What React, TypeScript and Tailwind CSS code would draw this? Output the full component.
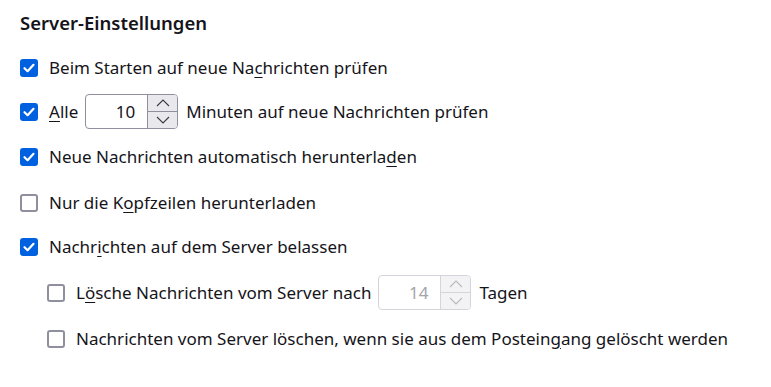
import React from "react";

const Check = ({ checked }: { checked: boolean }) =>
  checked ? (
    <span className="w-[18px] h-[18px] shrink-0 rounded-[3px] bg-[#0061e0] flex items-center justify-center">
      <svg width="14" height="14" viewBox="0 0 14 14" fill="none">
        <path d="M2.5 7.2 L5.6 10.2 L11.5 3.8" stroke="white" strokeWidth="2.2" strokeLinecap="round" strokeLinejoin="round" />
      </svg>
    </span>
  ) : (
    <span className="w-[18px] h-[18px] shrink-0 rounded-[3px] border-2 border-[#8f8f9d] bg-white" />
  );

const Spin = ({ value, disabled }: { value: string; disabled?: boolean }) => {
  const stroke = disabled ? "#b8b8c0" : "#3a3a42";
  return (
    <div
      className={
        "w-[93px] h-[35px] shrink-0 flex rounded-[4px] border overflow-hidden " +
        (disabled ? "border-[#d4d4da]" : "border-[#8f8f9d]")
      }
    >
      <div
        className={
          "flex-1 flex items-center justify-end pr-[12px] text-[17px] " +
          (disabled ? "text-[#a4a4ab]" : "text-[#15141a]")
        }
      >
        {value}
      </div>
      <div
        className={
          "w-[30px] flex flex-col border-l " +
          (disabled ? "border-[#d4d4da] bg-[#f3f3f5]" : "border-[#8f8f9d] bg-[#e9e9ed]")
        }
      >
        <div
          className={
            "flex-1 flex items-center justify-center border-b " +
            (disabled ? "border-[#d4d4da]" : "border-[#8f8f9d]")
          }
        >
          <svg width="14" height="8" viewBox="0 0 14 8" fill="none">
            <path d="M1 7 L7 1 L13 7" stroke={stroke} strokeWidth="1.1" />
          </svg>
        </div>
        <div className="flex-1 flex items-center justify-center">
          <svg width="14" height="8" viewBox="0 0 14 8" fill="none">
            <path d="M1 1 L7 7 L13 1" stroke={stroke} strokeWidth="1.1" />
          </svg>
        </div>
      </div>
    </div>
  );
};

const U = ({ children }: { children: React.ReactNode }) => (
  <span className="underline underline-offset-[3px]">{children}</span>
);

export default function App() {
  return (
    <div
      className="w-[771px] h-[387px] bg-white text-[#15141a] text-[17px] pl-[20px] flex flex-col whitespace-nowrap"
      style={{ fontFamily: '"Noto Sans", sans-serif' }}
    >
      <div className="h-[45px] flex items-center text-[18.5px] font-semibold">Server-Einstellungen</div>

      <label className="h-[45px] flex items-center gap-[11px]">
        <Check checked />
        <span>
          Beim Starten auf neue Na<U>c</U>hrichten prüfen
        </span>
      </label>

      <div className="h-[43px] flex items-center gap-[11px]">
        <Check checked />
        <div className="flex items-center gap-[7px]">
          <span>
            <U>A</U>lle
          </span>
          <Spin value="10" />
          <span className="ml-[1px]">Minuten auf neue Nachrichten prüfen</span>
        </div>
      </div>

      <label className="h-[47px] flex items-center gap-[11px]">
        <Check checked />
        <span>
          Neue Nachrichten automatisch herunterla<U>d</U>en
        </span>
      </label>

      <label className="h-[45px] flex items-center gap-[11px]">
        <Check checked={false} />
        <span>
          Nur die K<U>o</U>pfzeilen herunterladen
        </span>
      </label>

      <label className="h-[44px] flex items-center gap-[11px]">
        <Check checked />
        <span>
          Nachr<U>i</U>chten auf dem Server belassen
        </span>
      </label>

      <div className="h-[47px] flex items-center gap-[11px] pl-[27px]">
        <Check checked={false} />
        <div className="flex items-center gap-[7px]">
          <span>
            L<U>ö</U>sche Nachrichten vom Server nach
          </span>
          <Spin value="14" disabled />
          <span className="ml-[1px]">Tagen</span>
        </div>
      </div>

      <label className="h-[45px] flex items-center gap-[11px] pl-[27px]">
        <Check checked={false} />
        <span>
          Nachrichten vom Server löschen, wenn sie aus dem Postein<U>g</U>ang gelöscht werden
        </span>
      </label>
    </div>
  );
}
